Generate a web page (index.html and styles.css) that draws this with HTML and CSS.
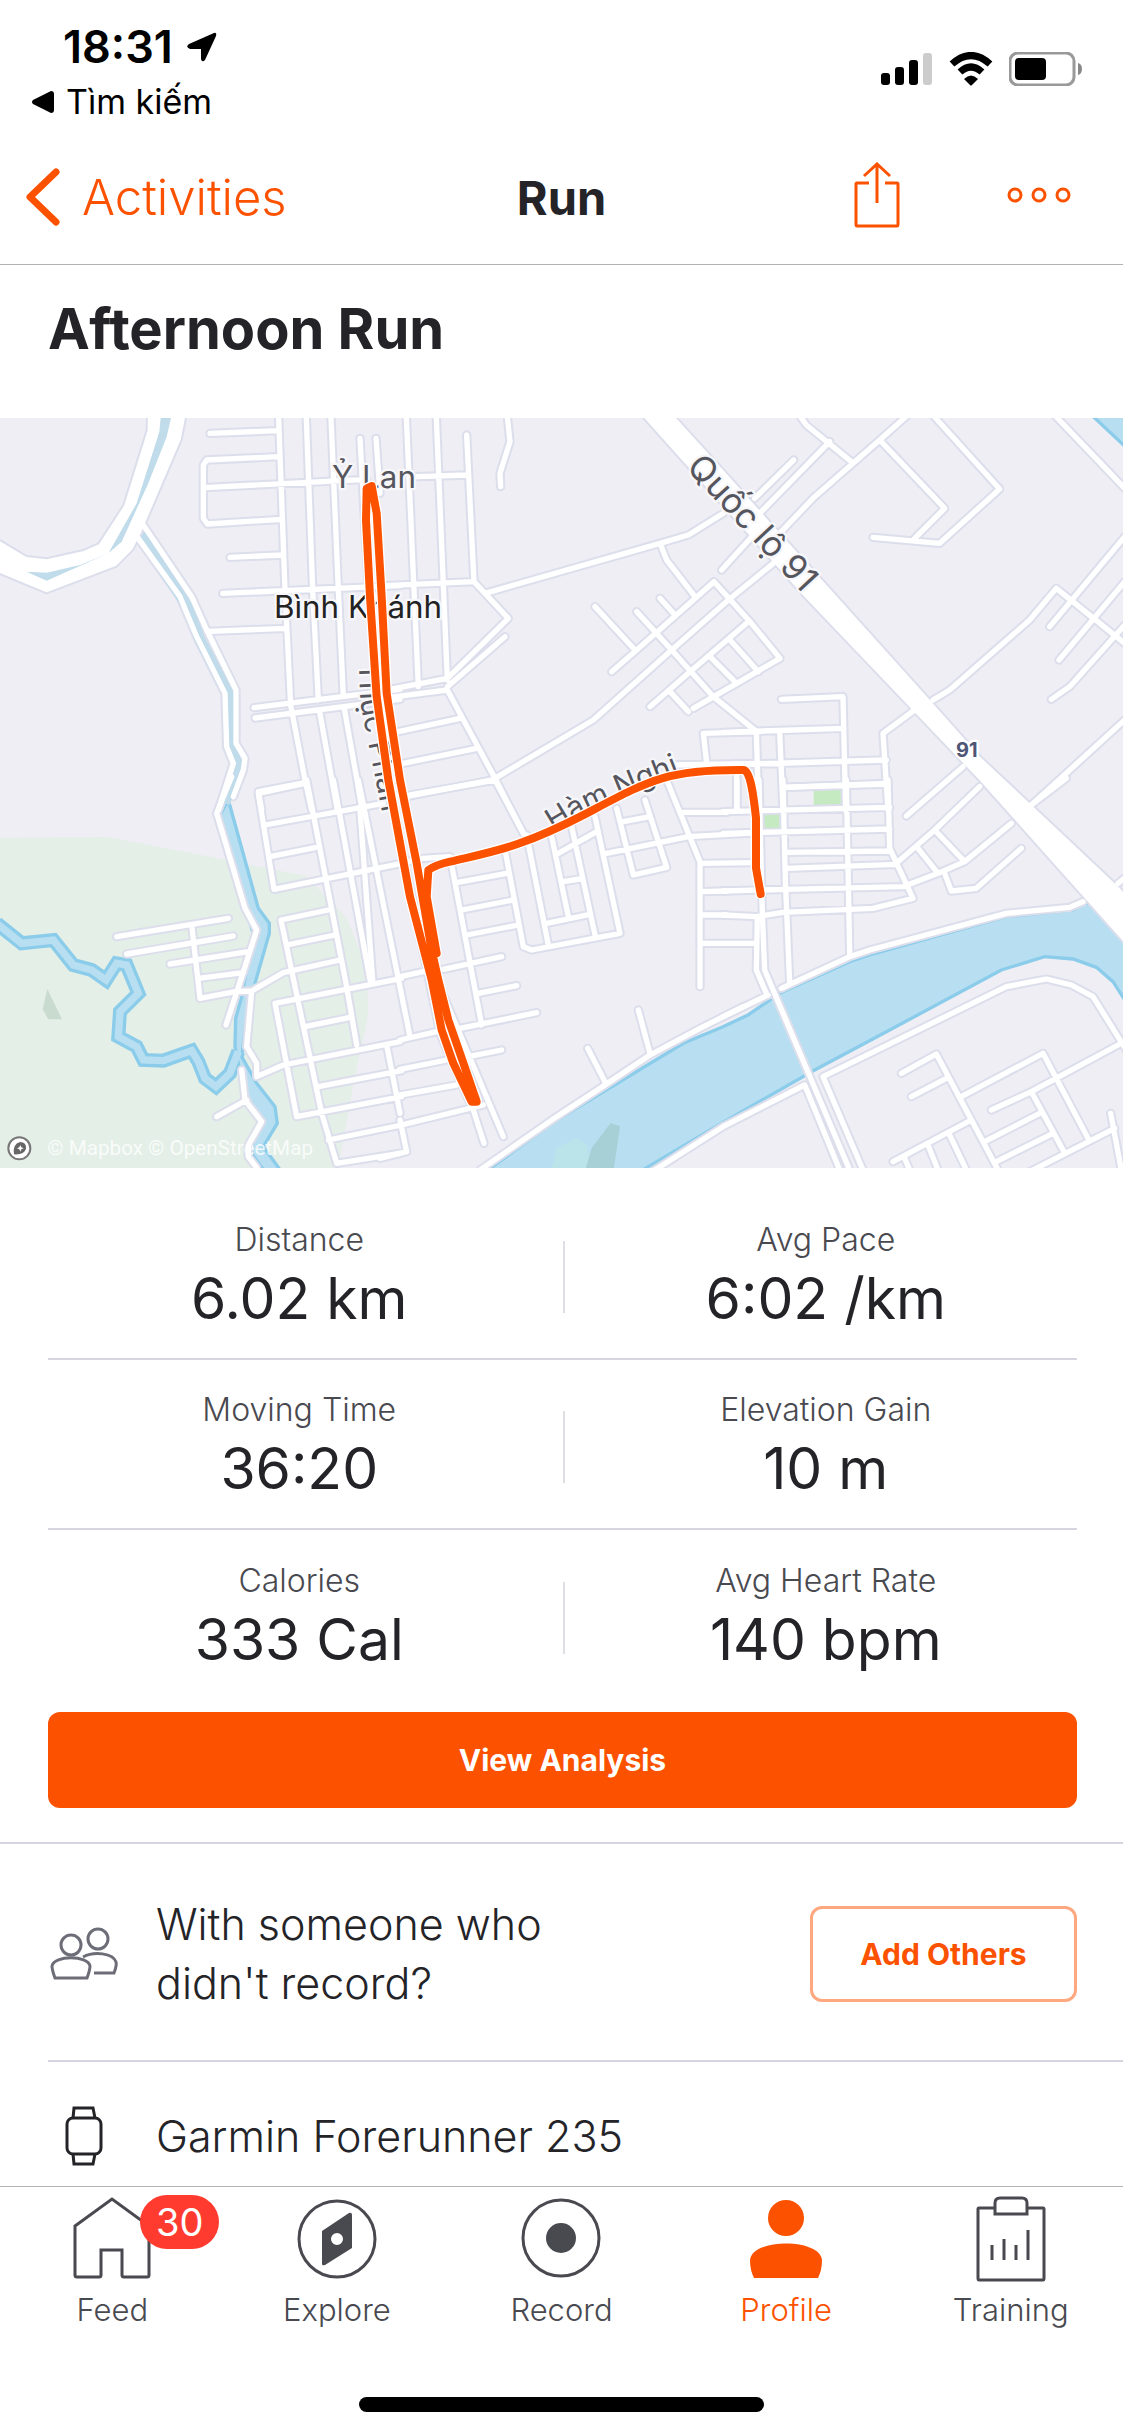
FILE: index.html
```
<!DOCTYPE html>
<html lang="en">
<head>
    <meta charset="UTF-8">
    <meta name="viewport" content="width=device-width, initial-scale=1.0">
    <title>Afternoon Run</title>
    <link rel="stylesheet" href="styles.css">
</head>
<body>
    <!-- Status bar -->
    <div class="status-bar">
        <div class="status-left">
            <div class="clock">
                <span>18:31</span>
                <svg width="30" height="30" viewBox="0 0 30 30"><path d="M2 12 27 1Q30 0 29 4L18 28Q15 31 14 27V17H3Q-2 15 2 12Z"/></svg>
            </div>
            <a class="back-app" href="#">
                <svg width="22" height="22" viewBox="0 0 22 22"><path d="M1 9 19 0Q22 0 22 3V19Q22 22 19 22L1 13Q-1 11 1 9Z"/></svg>
                Tìm kiếm
            </a>
        </div>
        <div class="status-right">
            <svg width="52" height="34" viewBox="0 0 52 34">
                <rect x="0" y="21" width="9" height="12" rx="3"/>
                <rect x="14" y="15" width="9" height="18" rx="3"/>
                <rect x="28" y="8" width="9" height="25" rx="3"/>
                <rect x="42" y="1" width="9" height="32" rx="3" fill="#ccc"/>
            </svg>
            <svg width="46" height="34" viewBox="0 0 46 34">
                <path d="M4 12Q23-5 42 12M12 20Q23 10 34 20" fill="none" stroke="#000" stroke-width="7"/>
                <path d="M16 27Q23 20 30 27L24 33Q23 34 22 33Z"/>
            </svg>
            <svg width="74" height="34" viewBox="0 0 74 34">
                <rect x="1" y="1" width="64" height="32" rx="8" fill="none" stroke="#999" stroke-width="3"/>
                <rect x="6" y="6" width="31" height="22" rx="4"/>
                <path d="M69 11Q73 12 73 17T69 23Z" fill="#888"/>
            </svg>
        </div>
    </div>

    <!-- Navigation -->
    <header class="nav-bar">
        <a class="nav-back" href="#">
            <svg width="34" height="58" viewBox="0 0 34 58"><path d="M30 4 4 29 30 54"/></svg>
            Activities
        </a>
        <h2>Run</h2>
        <div class="nav-actions">
            <button aria-label="Share">
                <svg width="46" height="66" viewBox="0 0 46 66"><path d="M15 21H3Q2 21 2 22V62Q2 64 3 64H43Q44 64 44 62V22Q44 21 43 21H31M23 41V2M10 14 23 2 36 14"/></svg>
            </button>
            <button aria-label="More">
                <svg width="64" height="16" viewBox="0 0 64 16"><circle cx="8" cy="8" r="6"/><circle cx="32" cy="8" r="6"/><circle cx="56" cy="8" r="6"/></svg>
            </button>
        </div>
    </header>

    <main>
        <h1>Afternoon Run</h1>

        <!-- Map -->
        <svg class="map" viewBox="0 0 3369 2250" role="img" aria-label="Route map">
            <defs>
                <g id="roads">
                    <!-- north west -->
                    <path transform="translate(0 -24)" d="M630 70 835 62M835 140 620 150 610 165V325L622 342 845 328M612 233 1100 208M690 442 850 435M668 550 1200 527M625 664 860 655M762 893 1200 838M765 924 1200 868M835 0 855 540 872 885 915 1110 935 1200M918 0 938 540 955 870M958 900 1012 1200M992 0 1015 540 1030 860M1032 890 1085 1190M1080 85 1105 540M1128 85 1140 250M785 1200 775 1145 915 1118M430 345 575 560 620 660 708 840V1000L735 1045 730 1080 700 1160M415 385 540 560 590 680 675 850 680 1010 700 1060 655 1200"/>
                    <!-- north -->
                    <path transform="translate(1080 -24)" d="M138 0 162 540 175 830M228 0 262 810M320 75 342 515M170 200 320 195M75 527 342 515 445 625 262 805 90 838M435 680 262 830M90 862 262 840 405 1105 490 1270M115 965 300 925M130 1060 350 1015M150 1158 405 1108M375 550 900 400 985 375 1090 310M440 0 450 95 420 190 422 230M900 400 920 450 1005 560M405 1105 700 930 935 720 1105 570 1240 460M755 785 830 720 1062 515 1170 635 1260 745 1000 895M705 590 825 720M900 565 945 615M830 605 935 720 1060 860 1190 965M870 890 990 785 1165 635M930 845 985 905M1050 740 1130 820M1110 690 1195 785M1085 480 1180 375M1040 1060 1030 970 1200 965M940 1065 1200 1060M1130 1060V1200"/>
                    <!-- north east -->
                    <path transform="translate(2169 -24)" d="M225 10 250 45 385 155M560 10 470 90 270 265 170 370M320 95 110 310M212 150 95 265M470 90 665 295 575 385M450 382 650 400 830 237 625 10M980 0 1205 235M630 870 680 840 920 630 1000 535 1205 700M1205 380 980 650M1205 515 1008 750M1205 645 1040 830 985 868M925 1185 1205 930M175 868 360 860 368 1200M575 900 480 970 495 1200M0 967 360 955M60 1063 490 1050M100 965 107 1200M170 965 180 1200M185 1132 490 1120M720 1070 550 1218"/>
                    <!-- south west -->
                    <path transform="translate(0 1086)" d="M350 470 685 415M380 522 700 468M510 552 745 515M595 595 730 578M575 435 600 655 705 635 755 633 850 578 1020 540M755 633 740 800 770 850V890L850 855 1200 785M725 870 735 960 785 1025 745 1095V1130L770 1163M650 1010 740 960M695-10 650 100 735 385 770 450 735 560 678 735M915 10 775 40 822 328 1205 250M795 135 1150 70M810 230 945 203M920 0 1040 620 1070 795M1000 0 1110 600M1075 0 1230 770M985 390 843 420 965 1000 1010 1150 1200 1120M860 495 1005 465M1205 595 825 670 890 1010 1205 950M915 740 1050 712M955 920 1205 872M985 1080 1205 1035M1160 795 1200 1000"/>
                    <!-- south -->
                    <path transform="translate(1080 1086)" d="M0 90 38 600M120 250 190 235 270 230M120 590 190 575M120 780 230 755M250 568 425 530M355 640 470 617M300 745 530 698M120 868 260 840M325 830 425 810M120 945 290 915M120 1036 370 975M120 1020 140 1115 60 1135M150 45 405 0 490 160M110 130 215 640 240 760 290 880 340 990 372 1090M430 1070 180 480M275 255 365 735M290 308 440 280M305 390 460 360M320 465 475 435M435 210 490 500 515 510 780 460 705 110M500 165 565 495M575 170 625 410M635 140 705 465M595 220 710 155M610 305 660 297M560 430 690 403M770 85 820 285 920 262 855 60M790 125 870 110M740 220 985 170 1200 158M920 0 1020 245V620M970 97H1100M1020 250 1180 248M1020 335 1100 333M1020 405H1100M1020 490H1190M835 690 870 820M683 805 735 905M360 1170 590 1010 735 915 870 825 1020 745 1150 680"/>
                    <!-- south east -->
                    <path transform="translate(2169 1086)" d="M180 0 187 300 200 610M370 0 380 520M495 0 500 205 570 355 450 385 180 397 100 410 0 405M180 22 495 12M0 95 500 82M0 160 500 147M190 217 500 213M190 265 520 253M0 333 190 328 540 320 645 280 725 245 865 130M525 245 635 150 770 20M635 150 725 245M585 205 645 280M665 280 685 333 760 325 895 205M925 75 1030-5M42 0V90M108 0 118 400 125 570M103 410 100 570 130 640M0 710 135 645M175 625 380 530 440 510 850 400 1040 382 1080 365M-220 1180 0 1040 245 915 350 1170M420 1170 300 890 850 620 970 597 1045 615 1110 650 1210 810M125 570 265 900 380 1170M535 880 640 822 825 1170M565 950 670 895M715 950 960 820 1095 1075M805 990 925 935 1185 795M925 935 1020 1110M785 1085 950 1000M820 1145 990 1060M920 1175 1175 1045M1163 1000 1195 1170M510 1145 745 1020M615 1095 645 1170M680 1065 730 1170M545 1135 560 1170M1185 310 1210 290"/>
                </g>
                <path id="river" d="M-10 1516 65 1576 160 1566 220 1641 275 1656 318 1686 350 1636 380 1641 415 1726 360 1781 355 1856 410 1886 430 1926 490 1928 575 1898 595 1931 615 1981 648 2006 690 1966 715 1900"/>
                <path id="route" d="M1100 211 1098 306 1110 536 1130 836 1165 1086 1230 1436 1295 1686 1325 1836 1360 1936 1415 2051H1430L1380 1906 1345 1806 1315 1686 1295 1596 1250 1336 1200 1086 1160 826 1145 536 1130 286 1115 204ZM1310 1606 1280 1436 1285 1356Q1310 1340 1350 1331C1480 1300 1560 1290 1760 1186 1950 1086 2000 1054 2230 1056 2250 1056 2260 1126 2268 1200V1350L2282 1428"/>
                <path id="ham-nghi" d="M1660 1240C1775 1165 1885 1125 2065 1055"/>
                <path id="thuc-phan" d="M1076 735 1082 860 1155 1225"/>
            </defs>

            <rect class="land" width="3369" height="2250"/>
            <path class="park" d="M0 1260 320 1256 650 1320 920 1375 1040 1500 1100 1650 1105 1790 1060 2000 1015 2250H0Z"/>
            <path class="wood" d="M142 1713 128 1773 145 1804H186Z"/>
            <path class="grass" d="M2441 1116H2527V1162H2441ZM2287 1188H2339V1234H2287Z"/>

            <!-- Water -->
            <use href="#river" class="river-edge"/>
            <path class="water edged" d="M685 1146 775 1471 808 1516V1546L765 1696 740 1800 725 1916 770 1996 825 2066 832 2116 790 2186 840 2255H790L750 2200 780 2110 735 2040 705 1886 707 1801 725 1736 760 1550 660 1190Z"/>
            <use href="#river" class="river"/>
            <path class="water edged" d="M1465 2255 1670 2106 2050 1876 2169 1826 2244 1791 2339 1726 2549 1631 2609 1611 3019 1496 3219 1476 3254 1456H3380V1755L3339 1691 3289 1648 3219 1623 3134 1616 3004 1656 2669 1836 2444 1956 2169 2113 1930 2255Z"/>
            <path class="water edged" d="M3279-5H3380V90Z"/>
            <path class="islet" d="M1655 2250 1670 2190 1730 2160 1760 2180 1775 2250Z"/>
            <path class="islet-dark" d="M1758 2250 1775 2190 1832 2115 1860 2125 1842 2250Z"/>

            <!-- Roads -->
            <use href="#roads" class="road-casing"/>
            <path class="canal" d="M422 350 560 562 602 668 690 836V986L712 1036 675 1156"/>
            <path class="wide-road" d="M441-10 440 36 370 261 295 376 250 396 140 421 80 414-10 360V464L140 526 350 446 400 396 425 346 545 66 560-10Z"/>
            <path class="canal-fill" d="M482 0 478 41 410 256 325 406 365 371 445 196 500 56 513 0ZM80 461 140 464 240 441 325 406 140 488Z"/>
            <path class="wide-road" d="M1920-10 2023-10 2169 151 2789 841 2944 1016 3019 1086 3359 1406 3380 1430V1586L2934 1086 2729 871 2409 536Z"/>
            <use href="#roads" class="road"/>

            <!-- Labels -->
            <g class="labels">
                <text x="996" y="211">Ỷ Lan</text>
                <text x="822" y="601" class="place">Bình Khánh</text>
                <text transform="translate(2056 150) rotate(47)" class="highway">Quốc lộ 91</text>
                <text class="small"><textPath href="#ham-nghi">Hàm Nghi</textPath></text>
                <text class="small"><textPath href="#thuc-phan">Thục Phán</textPath></text>
                <text x="2868" y="1016" class="shield">91</text>
            </g>

            <use href="#route" class="route-casing"/>
            <use href="#route" class="route"/>

            <g class="attribution">
                <circle cx="58" cy="2191" r="33"/>
                <path d="M42 2209Q37 2178 60 2172 80 2173 78 2192 73 2211 42 2209Z"/>
                <path class="spark" d="M61 2181 64 2188 71 2191 64 2194 61 2201 58 2194 51 2191 58 2188Z"/>
                <text x="142" y="2211">© Mapbox © OpenStreetMap</text>
            </g>
        </svg>

        <!-- Stats -->
        <section class="stats">
            <dl class="stat-row">
                <div class="stat"><dt>Distance</dt><dd>6.02 km</dd></div>
                <div class="stat"><dt>Avg Pace</dt><dd>6:02 /km</dd></div>
            </dl>
            <dl class="stat-row">
                <div class="stat"><dt>Moving Time</dt><dd>36:20</dd></div>
                <div class="stat"><dt>Elevation Gain</dt><dd>10 m</dd></div>
            </dl>
            <dl class="stat-row">
                <div class="stat"><dt>Calories</dt><dd>333 Cal</dd></div>
                <div class="stat"><dt>Avg Heart Rate</dt><dd>140 bpm</dd></div>
            </dl>
            <button class="analysis-btn">View Analysis</button>
        </section>

        <!-- Details -->
        <section class="details">
            <div class="detail-row others">
                <svg width="72" height="54" viewBox="0 0 72 54">
                    <circle cx="23" cy="18" r="10"/><circle cx="50" cy="12" r="10"/>
                    <path d="M7 51Q4 43 4 39C6 28 40 28 42 39Q42 43 39 51ZM35 30C46 24 65 26 68 35Q69 38 66 46H46"/>
                </svg>
                <p>With someone who didn't record?</p>
                <button class="add-btn">Add Others</button>
            </div>
            <div class="detail-row device">
                <svg width="72" height="62" viewBox="0 0 72 62">
                    <rect x="19" y="13" width="34" height="36" rx="6"/>
                    <path d="M25 13 26 3H45L47 13M25 49 26 59H45L47 49"/>
                </svg>
                <p>Garmin Forerunner 235</p>
            </div>
        </section>
    </main>

    <!-- Tab bar -->
    <nav class="tab-bar">
        <a href="#" class="tab">
            <span class="tab-icon">
                <svg width="82" height="88" viewBox="0 0 82 88"><path d="M4 31 41 4 78 31V80Q78 82 76 82H53Q51 82 51 80V55H30V80Q30 82 28 82H6Q4 82 4 80Z"/></svg>
                <span class="badge">30</span>
            </span>
            Feed
        </a>
        <a href="#" class="tab">
            <span class="tab-icon">
                <svg width="82" height="88" viewBox="0 0 82 88"><circle cx="41" cy="44" r="38"/><path class="solid" fill-rule="evenodd" d="M26 36 53 18Q56 17 56 20V53L29 70Q26 71 26 69ZM47 44A6 6 0 1 0 35 44 6 6 0 1 0 47 44Z"/></svg>
            </span>
            Explore
        </a>
        <a href="#" class="tab">
            <span class="tab-icon">
                <svg width="82" height="88" viewBox="0 0 82 88"><circle cx="41" cy="43" r="38"/><circle class="solid" cx="41" cy="43" r="15"/></svg>
            </span>
            Record
        </a>
        <a href="#" class="tab active">
            <span class="tab-icon">
                <svg width="82" height="88" viewBox="0 0 82 88"><circle class="solid" cx="41" cy="23" r="18"/><path class="solid" d="M9 83Q5 75 5 65C7 43 75 43 77 65Q77 75 73 83Z"/></svg>
            </span>
            Profile
        </a>
        <a href="#" class="tab">
            <span class="tab-icon">
                <svg width="82" height="88" viewBox="0 0 82 88"><path d="M25 13H9Q8 13 8 14V83Q8 85 9 85H73Q74 85 74 83V14Q74 13 73 13H57M30 3H52Q57 3 57 8V19H25V8Q25 3 30 3ZM22 50V65M34 44V65M46 50V65M58 35V65"/></svg>
            </span>
            Training
        </a>
    </nav>
    <div class="home-indicator"></div>
</body>
</html>
```

FILE: styles.css
```
* {
    margin: 0;
    padding: 0;
    box-sizing: border-box;
}

body {
    min-height: 100vh;
    display: flex;
    flex-direction: column;
    font-family: Inter, "Liberation Sans", sans-serif;
    font-weight: 300;
    color: #242428;
    background-color: #fff;
}

a {
    color: inherit;
    text-decoration: none;
}

button {
    font-family: inherit;
    background: none;
    border: none;
    cursor: pointer;
}

svg {
    display: block;
    flex-shrink: 0;
}

/* Status bar */
.status-bar {
    display: flex;
    justify-content: space-between;
    height: 130px;
    padding: 20px 40px 0 32px;
    color: #000;
}

.clock {
    display: flex;
    align-items: center;
    gap: 14px;
    padding-left: 31px;
    font-size: 45px;
    font-weight: 600;
    line-height: 54px;
}

.back-app {
    display: flex;
    align-items: center;
    gap: 12px;
    font-size: 34px;
    font-weight: 400;
    line-height: 56px;
}

.status-right {
    display: flex;
    gap: 15px;
    padding-top: 32px;
}

/* Navigation */
.nav-bar {
    display: grid;
    grid-template-columns: 1fr auto 1fr;
    align-items: center;
    height: 135px;
    padding: 0 26px;
    border-bottom: 1px solid #b2b2b2;
}

.nav-bar svg {
    fill: none;
    stroke: #fc5200;
    stroke-width: 3;
}

.nav-back {
    display: flex;
    align-items: center;
    gap: 22px;
    font-size: 49px;
    color: #fc5200;
}

.nav-bar .nav-back svg {
    stroke-width: 7;
    stroke-linecap: round;
    stroke-linejoin: round;
}

.nav-bar h2 {
    font-size: 47px;
    font-weight: 700;
}

.nav-actions {
    display: flex;
    justify-content: flex-end;
    align-items: center;
    gap: 107px;
    padding: 0 26px 4px 0;
}

h1 {
    padding: 0 48px;
    font-size: 56px;
    font-weight: 700;
    line-height: 128px;
    height: 153px;
}

/* Map */
.map {
    width: 100%;
    height: auto;
}

.land {
    fill: #efeef5;
}

.park {
    fill: #e4efe7;
}

.wood {
    fill: #c9dace;
}

.grass {
    fill: #c5eac2;
}

.water {
    fill: #b8dff1;
}

.edged {
    stroke: #8accea;
    stroke-width: 10;
}

.river,
.river-edge,
.canal {
    fill: none;
    stroke: #b8dff1;
    stroke-width: 22;
}

.river-edge {
    stroke: #8accea;
    stroke-width: 42;
}

.canal {
    stroke: #c0dbea;
    stroke-width: 32;
}

.canal-fill {
    fill: #c0dcea;
}

.islet {
    fill: #bbe4ea;
}

.islet-dark {
    fill: #a6d0d5;
}

.road,
.road-casing {
    fill: none;
    stroke: #fff;
    stroke-width: 16;
    stroke-linecap: round;
    stroke-linejoin: round;
}

.road-casing {
    stroke: #dcdeeb;
    stroke-width: 28;
}

.wide-road {
    fill: #fff;
    stroke: #dcdeeb;
    stroke-width: 6;
}

.route,
.route-casing {
    fill: none;
    stroke: #fc5200;
    stroke-width: 24;
    stroke-linecap: round;
    stroke-linejoin: round;
}

.route-casing {
    stroke: #fff;
    stroke-width: 32;
}

.labels {
    font-size: 94px;
    font-weight: 400;
    fill: #55555d;
    stroke: #f7f7fa;
    stroke-width: 14;
    stroke-linejoin: round;
    paint-order: stroke;
}

.labels .place {
    fill: #222;
}

.labels .highway {
    font-size: 104px;
}

.labels .small {
    font-size: 90px;
}

.labels .shield {
    font-size: 60px;
    font-weight: 700;
    fill: #4f5574;
    stroke: #fff;
}

.attribution {
    fill: #666;
    font-family: Roboto, sans-serif;
    font-size: 62px;
    font-weight: 400;
}

.attribution circle,
.attribution .spark {
    fill: #fff;
}

.attribution circle {
    stroke: #777;
    stroke-width: 6;
}

.attribution text {
    fill: #fff;
    fill-opacity: 0.8;
}

/* Stats */
.stats {
    padding: 22px 46px 34px 48px;
}

.stat-row {
    display: grid;
    grid-template-columns: 1fr 1fr;
    height: 170px;
    padding: 30px 0 24px;
    border-bottom: 2px solid #d5d5e0;
}

.stat-row:last-of-type {
    border-bottom: none;
}

.stat {
    display: flex;
    flex-direction: column;
    align-items: center;
    justify-content: center;
    gap: 4px;
    padding-right: 12px;
    text-align: center;
}

/* Short divider between the two columns */
.stat + .stat {
    padding: 0 0 0 12px;
    background: linear-gradient(#dfdfe3, #dfdfe3) left center / 2px 72px no-repeat;
}

.stat dt {
    font-size: 32px;
    line-height: 40px;
    color: #494950;
}

.stat dd {
    font-size: 57px;
    font-weight: 400;
    line-height: 70px;
}

.analysis-btn {
    width: 100%;
    height: 96px;
    margin-top: 12px;
    border-radius: 12px;
    font-size: 30px;
    font-weight: 700;
    color: #fff;
    background-color: #fc5200;
}

/* Details */
.details {
    padding-left: 48px;
    border-top: 2px solid #d5d5e0;
}

.detail-row {
    display: flex;
    align-items: center;
    gap: 36px;
    font-size: 43px;
    line-height: 59px;
}

.detail-row svg {
    fill: none;
    stroke: #6d6d78;
    stroke-width: 3;
}

.others {
    height: 218px;
    padding: 4px 46px 0 0;
    border-bottom: 2px solid #d5d5e0;
}

.others p {
    max-width: 420px;
}

.add-btn {
    width: 267px;
    height: 96px;
    margin-left: auto;
    border: 3px solid #ffa880;
    border-radius: 12px;
    font-size: 30px;
    font-weight: 700;
    color: #fc5200;
}

.device {
    height: 124px;
    padding-top: 24px;
}

.device svg {
    stroke: #242428;
}

/* Tab bar */
.tab-bar {
    display: grid;
    grid-template-columns: repeat(5, 1fr);
    margin-top: auto;
    height: 211px;
    padding-top: 8px;
    border-top: 1px solid #b2b2b2;
}

.tab {
    display: flex;
    flex-direction: column;
    align-items: center;
    gap: 7px;
    font-size: 31px;
    line-height: 40px;
    color: #494950;
}

.tab-icon {
    position: relative;
}

.tab svg {
    fill: none;
    stroke: currentColor;
    stroke-width: 3;
}

.tab svg .solid {
    fill: currentColor;
    stroke: none;
}

.tab.active {
    color: #fc5200;
}

.badge {
    position: absolute;
    top: 0;
    left: 69px;
    width: 79px;
    height: 54px;
    border-radius: 27px;
    font-size: 38px;
    font-weight: 400;
    line-height: 54px;
    text-align: center;
    color: #fff;
    background-color: #ff3b30;
}

.home-indicator {
    width: 36%;
    height: 15px;
    margin: 0 auto 24px;
    border-radius: 8px;
    background-color: #000;
}
```
